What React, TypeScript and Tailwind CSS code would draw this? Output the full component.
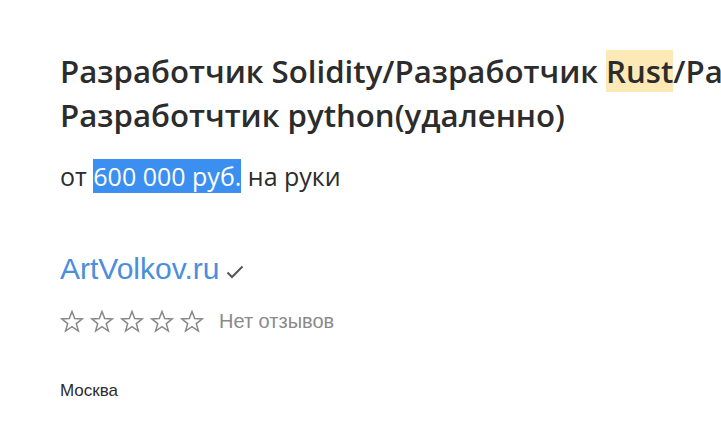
import React from 'react';

const Star = () => (
  <svg width="24" height="23" viewBox="0 0 24 23" fill="none" stroke="#888888" strokeWidth="1.5" strokeLinejoin="miter">
    <path d="M12 1.5 L14.7 8.6 L22.3 8.9 L16.3 13.6 L18.4 21 L12 16.7 L5.6 21 L7.7 13.6 L1.7 8.9 L9.3 8.6 Z" />
  </svg>
);

const App: React.FC = () => {
  return (
    <div className="w-[721px] h-[428px] overflow-hidden bg-white">
      <div className="pl-[60px] pt-[49px]">
        {/* Title */}
        <h1
          className="text-[31.2px] leading-[44px] font-semibold text-[#2c2c2c] whitespace-nowrap"
          style={{ fontFamily: '"Open Sans", Lato, sans-serif' }}
        >
          <div>
            Разработчик Solidity/Разработчик <span className="bg-[#fde9b5]">Rust</span>/Разработчик Go
          </div>
          <div>Разработчтик python(удаленно)</div>
        </h1>

        {/* Salary */}
        <p
          className="mt-[21px] text-[25px] leading-[36px] text-[#2c2c2c]"
          style={{ fontFamily: '"Open Sans", sans-serif' }}
        >
          от <span className="bg-[#3b8ff0] text-white">600 000 руб.</span> на руки
        </p>

        {/* Company */}
        <div className="mt-[58px] flex items-center gap-[6px]" style={{ fontFamily: '"Liberation Sans", Arial, sans-serif' }}>
          <a className="text-[30px] leading-[34px] text-[#4a8fdc]">ArtVolkov.ru</a>
          <svg width="18" height="14" viewBox="0 0 18 14" fill="none" stroke="#555" strokeWidth="2" className="mt-[6px]">
            <path d="M1.5 7.5 L6 12 L16.5 1.5" />
          </svg>
        </div>

        {/* Rating */}
        <div className="mt-[20px] flex items-center" style={{ fontFamily: '"Liberation Sans", Arial, sans-serif' }}>
          <div className="flex gap-[6px]">
            <Star />
            <Star />
            <Star />
            <Star />
            <Star />
          </div>
          <span className="ml-[15px] text-[20px] text-[#8a8a8a]">Нет отзывов</span>
        </div>

        {/* City */}
        <p className="mt-[42px] text-[17px] text-[#2c2c2c]" style={{ fontFamily: '"Liberation Sans", Arial, sans-serif' }}>
          Москва
        </p>
      </div>
    </div>
  );
};

export default App;
